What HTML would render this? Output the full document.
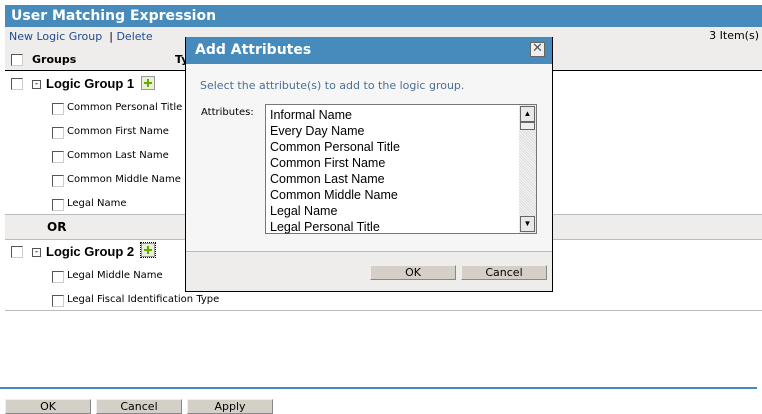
<!DOCTYPE html>
<html><head><style>
*{margin:0;padding:0;box-sizing:border-box}
body{width:762px;height:414px;background:#fff;font-family:"DejaVu Sans","Liberation Sans",sans-serif;position:relative;overflow:hidden;font-size:11px;color:#000}
.a{position:absolute;white-space:nowrap}
.cb{position:absolute;width:12px;height:12px;border:1px solid #555;border-right-color:#ccc;border-bottom-color:#ccc;background:#fff}
.sub{font-size:10px}
.btn{position:absolute;height:15px;background:#d4d0c8;border:1px solid #888;border-top-color:#eee;border-left-color:#eee;text-align:center;font-size:11px;line-height:13px}
.plus{position:absolute;width:14px;height:14px;border:1px solid #999;background:#e8f0d8}
.plus:before{content:"";position:absolute;left:5px;top:2px;width:2px;height:8px;background:#6a0}
.plus:after{content:"";position:absolute;left:2px;top:5px;width:8px;height:2px;background:#6a0}
.grp{font-weight:bold;font-size:13px;font-family:"Liberation Sans",sans-serif}
</style></head><body>
<div class="a" style="left:5px;top:5px;width:757px;height:22px;background:#468bbb;color:#fff;font-weight:bold;font-size:14px;line-height:22px;padding-left:6px">User Matching Expression</div>
<div class="a" style="left:5px;top:27px;width:757px;height:44px;background:#eeedeb;border-bottom:1px solid #000"></div>
<div class="a" style="left:9px;top:30px;color:#1d4a92;font-size:11px">New Logic Group &nbsp;<span style="color:#000">|</span> Delete</div>
<div class="a" style="right:3px;top:29px;font-size:11px">3 Item(s)</div>
<div class="cb" style="left:11px;top:54px"></div>
<div class="a" style="left:32px;top:53px;font-weight:bold;font-size:11px">Groups</div>
<div class="a" style="left:175px;top:53px;font-weight:bold;font-size:11px">Ty</div>

<div class="cb" style="left:11px;top:78px"></div>
<div class="a" style="left:32px;top:80px;width:9px;height:9px;border:1px solid #555;font-size:9px;line-height:6px;text-align:center">-</div>
<div class="a grp" style="left:46px;top:76px">Logic Group 1</div>
<div class="plus" style="left:141px;top:76px"></div>
<div class="cb" style="left:52px;top:103px"></div><div class="a sub" style="left:67px;top:102px">Common Personal Title</div>
<div class="cb" style="left:52px;top:127px"></div><div class="a sub" style="left:67px;top:126px">Common First Name</div>
<div class="cb" style="left:52px;top:151px"></div><div class="a sub" style="left:67px;top:150px">Common Last Name</div>
<div class="cb" style="left:52px;top:175px"></div><div class="a sub" style="left:67px;top:174px">Common Middle Name</div>
<div class="cb" style="left:52px;top:199px"></div><div class="a sub" style="left:67px;top:198px">Legal Name</div>
<div class="a" style="left:5px;top:214px;width:757px;height:26px;background:#eeedeb;border-top:1px solid #bbb;border-bottom:1px solid #bbb"></div>
<div class="a" style="left:47px;top:220px;font-weight:bold;font-size:12px">OR</div>
<div class="cb" style="left:11px;top:246px"></div>
<div class="a" style="left:32px;top:248px;width:9px;height:9px;border:1px solid #555;font-size:9px;line-height:6px;text-align:center">-</div>
<div class="a grp" style="left:46px;top:244px">Logic Group 2</div>
<div class="plus" style="left:141px;top:243px;outline:1px dotted #000"></div>
<div class="cb" style="left:52px;top:271px"></div><div class="a sub" style="left:67px;top:270px">Legal Middle Name</div>
<div class="cb" style="left:52px;top:295px"></div><div class="a sub" style="left:67px;top:294px">Legal Fiscal Identification Type</div>
<div class="a" style="left:5px;top:310px;width:757px;height:1px;background:#bbb"></div>

<div class="a" style="left:0;top:387px;width:757px;height:2px;background:#468bbb"></div>
<div class="btn" style="left:5px;top:399px;width:86px">OK</div>
<div class="btn" style="left:96px;top:399px;width:86px">Cancel</div>
<div class="btn" style="left:187px;top:399px;width:86px">Apply</div>

<div class="a" style="left:185px;top:37px;width:368px;height:255px;background:#f6f6f6;border:1px solid #000;border-top:none;overflow:hidden">
 <div class="a" style="left:0;top:0;width:366px;height:27px;background:#468bbb;color:#fff;font-weight:bold;font-size:14px;line-height:27px;padding-left:9px">Add Attributes</div>
 <div class="a" style="left:344px;top:5px;width:15px;height:15px;background:#eee;border:1px solid #666;color:#555;font-size:13px;line-height:12px;text-align:center">✕</div>
 <div class="a" style="left:14px;top:42px;color:#4a6f94;font-size:11px">Select the attribute(s) to add to the logic group.</div>
 <div class="a" style="left:15px;top:70px;font-size:10px">Attributes:</div>
 <div class="a" style="left:79px;top:67px;width:272px;height:130px;background:#fff;border:1px solid #777;font-family:'Liberation Sans',sans-serif;font-size:12.5px;line-height:16px;padding:2px 0 0 4px">
  Informal Name<br>Every Day Name<br>Common Personal Title<br>Common First Name<br>Common Last Name<br>Common Middle Name<br>Legal Name<br>Legal Personal Title
  <div class="a" style="right:0;top:0;width:17px;height:128px;background:#e0e0e0;background-image:repeating-linear-gradient(45deg,#ddd 0 1px,#f4f4f4 1px 2px)"></div>
  <div class="a" style="right:1px;top:1px;width:15px;height:16px;background:#e8e8e8;border:1px solid #666;font-size:8px;text-align:center;line-height:14px">▲</div>
  <div class="a" style="right:1px;top:17px;width:15px;height:8px;background:#eee;border:1px solid #666"></div>
  <div class="a" style="right:1px;bottom:1px;width:15px;height:16px;background:#e8e8e8;border:1px solid #666;font-size:8px;text-align:center;line-height:14px">▼</div>
 </div>
 <div class="a" style="left:0;top:214px;width:366px;height:40px;background:#eeedeb;border-top:1px solid #bbb"></div>
 <div class="btn" style="left:184px;top:228px;width:86px">OK</div>
 <div class="btn" style="left:275px;top:228px;width:86px">Cancel</div>
</div>
</body></html>
